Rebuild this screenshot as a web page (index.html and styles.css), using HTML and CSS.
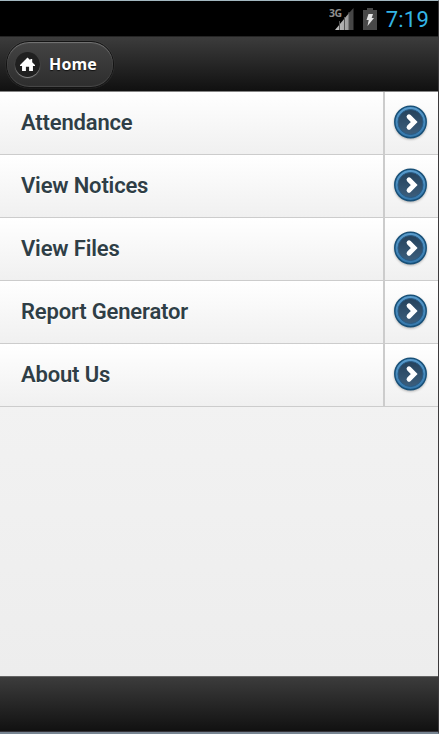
FILE: index.html
```
<!DOCTYPE html>
<html lang="en">
<head>
<meta charset="utf-8">
<title>Home</title>
<link rel="stylesheet" href="styles.css">
</head>
<body>
<svg class="defs" aria-hidden="true">
  <defs>
    <linearGradient id="ring" x1="0" y1="0" x2="0" y2="1"><stop offset="0" stop-color="#5b9dce"/><stop offset="1" stop-color="#3477ab"/></linearGradient>
    <linearGradient id="disc" x1="0" y1="0" x2="0" y2="1"><stop offset="0" stop-color="#25425c"/><stop offset="1" stop-color="#3c5e7c"/></linearGradient>
    <linearGradient id="sig" x1="0" x2="1"><stop offset="0" stop-color="#c4c4c4"/><stop offset="1" stop-color="#9c9c9c"/></linearGradient>
    <symbol id="arrow" viewBox="0 0 34 34">
      <circle cx="16.5" cy="17" r="15.7" fill="url(#ring)" stroke="#185078" stroke-width="1.5"/>
      <circle cx="16.5" cy="17" r="12.5" fill="url(#disc)" stroke="#285b85" stroke-width="1"/>
      <path d="M15 11.8l5.2 5.2-5.2 5.2" fill="none" stroke="#fff" stroke-width="4.8" stroke-linecap="round"/>
    </symbol>
  </defs>
</svg>
<div class="screen">
  <div class="status">
    <svg class="signal" width="28" height="24" viewBox="0 0 28 24">
      <text class="network" x="0" y="9.5" textLength="13">3G</text>
      <path d="M24.5 1v22H20V6z" fill="#464646"/>
      <path d="M20 6v17H6z" fill="url(#sig)"/>
      <path d="M10.5 14v9M15.5 10v13M20 5v18" stroke="#555" stroke-width="1"/>
    </svg>
    <svg class="battery" width="14" height="22" viewBox="0 0 14 22">
      <path d="M4 0h6v2h4v20H0V2h4z" fill="#484848"/>
      <path d="M5.5 6H10L8.7 10H11L4.5 18l1.2-6H3.5z" fill="#e4e4e4"/>
    </svg>
    <span class="clock">7:19</span>
  </div>
  <header class="header">
    <a class="home">
      <span class="home-icon"><svg width="15" height="15" viewBox="0 0 16 15"><path d="M8 0l3 3V1.5h2V5l3 3v1h-2.2v5.5H9.7V10H6.3v4.5H2.2V9H0V8z" fill="#fff"/></svg></span>
      <span class="home-text">Home</span>
    </a>
  </header>
  <ul class="menu">
    <li><span class="label">Attendance</span><span class="go"><svg width="34" height="34"><use href="#arrow"/></svg></span></li>
    <li><span class="label">View Notices</span><span class="go"><svg width="34" height="34"><use href="#arrow"/></svg></span></li>
    <li><span class="label">View Files</span><span class="go"><svg width="34" height="34"><use href="#arrow"/></svg></span></li>
    <li><span class="label">Report Generator</span><span class="go"><svg width="34" height="34"><use href="#arrow"/></svg></span></li>
    <li><span class="label">About Us</span><span class="go"><svg width="34" height="34"><use href="#arrow"/></svg></span></li>
  </ul>
  <footer class="footer"></footer>
</div>
</body>
</html>
```
FILE: styles.css
```
* { box-sizing: border-box; }
body { margin: 0; overflow: hidden; }
.defs { position: absolute; width: 0; height: 0; }
.screen {
  width: 439px;
  height: 734px;
  display: flex;
  flex-direction: column;
  border-top: 1px solid #a3b7c0;
  border-right: 1px solid #3c3a3c;
  border-bottom: 2px solid #778491;
  background: linear-gradient(#f2f2f2 400px, #ececec);
}
.status {
  height: 35px;
  flex: none;
  display: flex;
  justify-content: flex-end;
  align-items: center;
  padding-right: 9px;
  background: #000;
}
.signal { margin-right: 6px; }
.network { font: bold 10.5px "Open Sans", sans-serif; fill: #8e8e8e; }
.battery { margin-right: 9px; }
.clock { font: 22px/32px Roboto, sans-serif; color: #33b5e5; letter-spacing: .2px; padding-top: 2px; }
.header {
  height: 55px;
  flex: none;
  display: flex;
  align-items: center;
  padding: 2px 6px 0;
  border-top: 1px solid #242424;
  border-bottom: 1px solid #111;
  background: linear-gradient(#3c3c3c, #111);
}
.home {
  width: 108px;
  height: 47px;
  display: flex;
  align-items: center;
  padding-left: 8px;
  border: 1px solid #141414;
  border-radius: 23px;
  background: linear-gradient(#444, #2d2d2d);
  box-shadow: inset 0 1px 1px #777, inset 0 -1px 1px #4a4a4a, 0 0 1px #666;
  color: #fff;
  font: bold 16px/20px "Open Sans", sans-serif;
  text-shadow: 0 1px 1px #111;
}
.home-text { letter-spacing: .15px; padding-bottom: 1px; }
.home-icon {
  width: 25px;
  height: 25px;
  display: flex;
  align-items: center;
  justify-content: center;
  margin-right: 9px;
  border-radius: 50%;
  background: #202020;
  box-shadow: 0 1px 1px #8a8a8a;
}
.menu { margin: 0; padding: 0; list-style: none; border-top: 1px solid #858585; }
.menu li {
  height: 63px;
  display: flex;
  border-bottom: 1px solid #ccc;
  background: linear-gradient(#fff, #f0f0f0);
}
.label {
  flex: 1;
  padding-left: 21px;
  color: #2f3e46;
  font: 600 22px/62px Roboto, sans-serif;
  letter-spacing: -.17px;
  text-shadow: 0 1px 0 #fff;
}
.go {
  width: 55px;
  display: flex;
  align-items: center;
  padding: 0 0 2px 9px;
  border-left: 2px solid #ccc;
}
.go svg { filter: drop-shadow(0 1px 1px #0004); }
.footer {
  height: 56px;
  flex: none;
  margin-top: auto;
  border-top: 1px solid #646464;
  border-bottom: 1px solid #343238;
  background: linear-gradient(#3c3c3c, #111);
}
```
